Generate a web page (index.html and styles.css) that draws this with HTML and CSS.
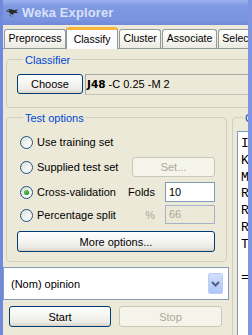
FILE: index.html
```html
<!DOCTYPE html>
<html>
<head>
<meta charset="utf-8">
<link rel="stylesheet" href="styles.css">
</head>
<body>
<div class="window">
  <div class="inner">
    <div class="titlebar">
      <svg class="app-icon" width="13" height="10" viewBox="0 0 14 10">
        <path d="M0 3 L3 1 L6 1 L9 2 L13 1 L11 3 L13 5 L9 5 L7 7 L5 6 L3 4 Z" fill="#2b2b2b"/>
        <path d="M4 7 L6 9" stroke="#444" stroke-width="1"/>
        <circle cx="2.5" cy="2.5" r="0.6" fill="#9aa"/>
      </svg>
      <span class="title">Weka Explorer</span>
    </div>
    <div class="tabs">
      <div class="tab">Preprocess</div>
      <div class="tab selected">Classify</div>
      <div class="tab">Cluster</div>
      <div class="tab">Associate</div>
      <div class="tab">Select attributes</div>
      <div class="tab">Visualize</div>
    </div>
    <div class="panel">
      <div class="group classifier">
        <div class="legend">Classifier</div>
        <div class="classifier-row">
          <button class="btn choose">Choose</button>
          <div class="scheme"><b>J48</b> -C 0.25 -M 2</div>
        </div>
      </div>
      <div class="columns">
        <div class="left">
          <div class="group test-options">
            <div class="legend">Test options</div>
            <div class="row">
              <span class="radio"></span><span class="opt">Use training set</span>
            </div>
            <div class="row">
              <span class="radio"></span><span class="opt">Supplied test set</span>
              <button class="btn disabled set">Set...</button>
            </div>
            <div class="row">
              <span class="radio checked"></span><span class="opt">Cross-validation</span>
              <span class="field-label">Folds</span>
              <span class="input">10</span>
            </div>
            <div class="row split">
              <span class="radio"></span><span class="opt">Percentage split</span>
              <span class="field-label muted">%</span>
              <span class="input disabled">66</span>
            </div>
            <button class="btn more">More options...</button>
          </div>
          <div class="combo">
            <span class="combo-text">(Nom) opinion</span>
            <span class="combo-btn">
              <svg width="9" height="6" viewBox="0 0 9 6"><path d="M1 1 L4.5 4.5 L8 1" fill="none" stroke="#4d6185" stroke-width="2"/></svg>
            </span>
          </div>
          <div class="actions">
            <button class="btn start">Start</button>
            <button class="btn disabled stop">Stop</button>
          </div>
        </div>
        <div class="group output">
          <div class="legend">Classifier output</div>
          <pre class="output-text">Incorrectly Classified Instances        11               26.1905 %
Kappa statistic                          0.4734
Mean absolute error                      0.3018
Root mean squared error                  0.4564
Relative absolute error                 62.5863 %
Root relative squared error             92.6911 %
Total Number of Instances               42

=== Detailed Accuracy By Class ===</pre>
        </div>
      </div>
    </div>
  </div>
</div>
</body>
</html>
```
FILE: styles.css
```css
* { box-sizing: border-box; }
html, body { margin: 0; padding: 0; }
body {
  width: 252px;
  height: 335px;
  overflow: hidden;
  background: #ece9d8;
  font-family: "Liberation Sans", Arial, sans-serif;
  font-size: 11px;
  color: #000;
}
.window {
  width: 252px;
  height: 335px;
  overflow: hidden;
  border-left: 3px solid #7189dc;
  border-right: 4px solid #7f93e3;
  background: #ece9d8;
}
.inner {
  width: 440px;
  height: 335px;
  display: flex;
  flex-direction: column;
}
.titlebar {
  flex: none;
  height: 25px;
  display: flex;
  align-items: center;
  background: linear-gradient(#9cb2ee, #7e98e2 25%, #7a94df 80%, #7189da);
  padding-left: 3px;
}
.app-icon { margin-right: 3px; margin-top: 1px; }
.title {
  font-weight: bold;
  font-size: 13px;
  color: #d8e1f8;
  letter-spacing: 0.1px;
}
.tabs {
  flex: none;
  height: 23px;
  display: flex;
  align-items: flex-end;
  padding-left: 1px;
}
.tab {
  height: 19px;
  padding: 0 3.5px;
  margin-right: 1px;
  font-size: 10.5px;
  line-height: 17px;
  white-space: nowrap;
  border: 1px solid #919b9c;
  border-bottom: none;
  border-radius: 3px 3px 0 0;
  background: linear-gradient(#fefefe, #f6f5f1 60%, #ebe9e2);
}
.tab.selected {
  height: 22px;
  margin-left: -1px;
  margin-bottom: -1px;
  padding: 0 6.6px;
  line-height: 18px;
  position: relative;
  z-index: 1;
  background: #fcfcfe;
  border-top: 3px solid #f9b53a;
}
.panel {
  flex: 1;
  min-height: 0;
  overflow: hidden;
  border-top: 1px solid #919b9c;
  padding-left: 3px;
  display: flex;
  flex-direction: column;
}
.group {
  border: 1px solid #d0d0bf;
  border-radius: 4px;
}
.legend {
  margin: -6px 0 0 6px;
  padding: 0 2px;
  width: max-content;
  line-height: 13px;
  color: #0046d5;
  background: #ece9d8;
}
.classifier {
  flex: none;
  margin-top: 10px;
  padding: 0 0 12px 10px;
}
.classifier-row {
  display: flex;
  margin-top: 7px;
}
.btn {
  font-family: inherit;
  font-size: 11px;
  color: #000;
  border: 1px solid #003c74;
  border-radius: 3px;
  background: linear-gradient(#ffffff, #f5f5f2 45%, #ecebe5 80%, #d8d3c8);
  padding: 0;
  height: 21px;
}
.btn.disabled {
  color: #aca899;
  border-color: #c9c7ba;
  background: #f5f4ea;
}
.choose { width: 66px; height: 20px; }
.scheme {
  margin-left: 2px;
  flex: 1;
  height: 21px;
  border-top: 1px solid #a7a6a2;
  border-left: 1px solid #a7a6a2;
  border-bottom: 1px solid #c8c5b8;
  padding-left: 1px;
  line-height: 19px;
  white-space: nowrap;
}
.scheme b { font-family: "DejaVu Sans", sans-serif; font-size: 10.5px; }
.columns {
  flex: none;
  display: flex;
  align-items: flex-start;
  margin-top: 9px;
  margin-left: -3px;
}
.left {
  flex: none;
  width: 226px;
  display: flex;
  flex-direction: column;
}
.test-options {
  margin: 0 2px 0 3px;
  padding: 0 11px 9px 10px;
  display: flex;
  flex-direction: column;
}
.row {
  height: 20px;
  display: flex;
  align-items: center;
  margin-top: 5px;
}
.test-options .legend + .row { margin-top: 7px; }
.row.split { margin-top: 3px; }
.radio {
  width: 13px;
  height: 13px;
  border-radius: 50%;
  border: 1px solid #1c5180;
  background: linear-gradient(135deg, #dcdcd4, #f4f4f0 55%, #ffffff);
  margin-left: 3px;
  margin-right: 4px;
  display: flex;
  align-items: center;
  justify-content: center;
  flex: none;
}
.radio.checked::after {
  content: "";
  width: 5px;
  height: 5px;
  border-radius: 50%;
  background: radial-gradient(circle at 35% 35%, #5fd45f, #21a121 60%, #118011);
}
.opt { flex: 1; min-width: 0; white-space: nowrap; }
.set { width: 83px; height: 20px; }
.field-label { width: 30px; text-align: right; margin-right: 10px; flex: none; }
.field-label.muted { color: #aca899; }
.input {
  flex: none;
  width: 50px;
  height: 20px;
  border: 1px solid #7f9db9;
  background: #fff;
  padding-left: 3px;
  line-height: 18px;
}
.split .input { height: 19px; line-height: 17px; align-self: flex-start; }
.input.disabled {
  background: #ece9d8;
  color: #aca899;
  border-color: #a6b3c4;
}
.more { margin-top: 6px; height: 21px; }
.combo {
  margin-top: 5px;
  height: 33px;
  border: 1px solid #7f9db9;
  background: #fff;
  display: flex;
  align-items: center;
  padding: 0 5px 0 7px;
}
.combo-text { flex: 1; }
.combo-btn {
  width: 15px;
  height: 21px;
  border: 1px solid #b9cdf6;
  border-radius: 2px;
  background: linear-gradient(#d3dffb, #bccff9 60%, #b1c6f8);
  display: flex;
  align-items: center;
  justify-content: center;
}
.actions {
  display: flex;
  gap: 8px;
  margin-top: 6px;
  padding-left: 6px;
}
.start { width: 102px; }
.stop { width: 103px; }
.output {
  margin-left: 3px;
  flex: 1;
  height: 240px;
  padding: 0 0 0 4px;
}
.output-text {
  margin: 6px 0 0 0;
  height: 240px;
  border: 1px solid #7f9db9;
  background: #fff;
  padding: 4px 0 0 3px;
  font-family: "Liberation Mono", "Courier New", monospace;
  font-size: 13px;
  line-height: 16.8px;
  overflow: hidden;
}
```
